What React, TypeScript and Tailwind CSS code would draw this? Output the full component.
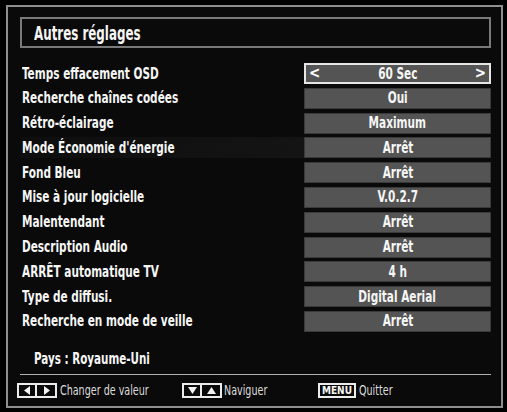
const settings = [
  { label: 'Temps effacement OSD', value: '60 Sec' },
  { label: 'Recherche chaînes codées', value: 'Oui' },
  { label: 'Rétro-éclairage', value: 'Maximum' },
  { label: "Mode Économie d'énergie", value: 'Arrêt' },
  { label: 'Fond Bleu', value: 'Arrêt' },
  { label: 'Mise à jour logicielle', value: 'V.0.2.7' },
  { label: 'Malentendant', value: 'Arrêt' },
  { label: 'Description Audio', value: 'Arrêt' },
  { label: 'ARRÊT automatique TV', value: '4 h' },
  { label: 'Type de diffusi.', value: 'Digital Aerial' },
  { label: 'Recherche en mode de veille', value: 'Arrêt' },
];

const SELECTED = 0;
const HIGHLIGHT = 3;

type Dir = 'left' | 'right' | 'up' | 'down';

const Triangle = ({ dir }: { dir: Dir }) => {
  const pts = {
    left: '8,1 8,10 2,5.5',
    right: '3,1 3,10 9,5.5',
    up: '5.5,2 10,9 1,9',
    down: '1,2 10,2 5.5,9',
  }[dir];
  return (
    <svg width="11" height="11" viewBox="0 0 11 11">
      <polygon points={pts} fill="#f2f2f2" />
    </svg>
  );
};

const KeyPair = ({ a, b }: { a: Dir; b: Dir }) => (
  <div className="flex h-[15px] border-2 border-[#ececec]">
    <div className="flex w-[18px] items-center justify-center border-r-2 border-[#ececec]">
      <Triangle dir={a} />
    </div>
    <div className="flex w-[18px] items-center justify-center">
      <Triangle dir={b} />
    </div>
  </div>
);

export default function App() {
  return (
    <div className="h-[412px] w-[507px] bg-black pl-[6px] pt-[5px] font-['Liberation_Sans_Narrow','DejaVu_Sans_Condensed',sans-serif]">
      <div className="flex h-[403px] w-[497px] flex-col border-2 border-[#8e8e8e] bg-[#0a0a0a]">
        {/* title */}
        <div className="ml-[12px] mr-[10px] mt-[10px] flex h-[31px] items-center border-2 border-[#7a7a7a] pl-[12px]">
          <span className="inline-block origin-left scale-x-[0.66] whitespace-nowrap text-[20px] font-bold leading-none text-[#f6f6f6]">
            Autres réglages
          </span>
        </div>

        {/* settings */}
        <div className="ml-[12px] mr-[10px] mt-[15px] flex flex-col gap-[3.8px]">
          {settings.map((s, i) => (
            <div
              key={s.label}
              className={`flex h-[21px] items-center ${
                i === HIGHLIGHT ? 'bg-gradient-to-r from-[#0e0e0e] to-[#181818]' : ''
              }`}
            >
              <div className="flex-1 pl-[2px]">
                <span className="inline-block origin-left scale-x-[0.73] whitespace-nowrap text-[16px] font-bold text-[#f6f6f6]">
                  {s.label}
                </span>
              </div>
              <div
                className={`relative flex h-[21px] w-[187px] items-center justify-center bg-[#545454] ${
                  i === SELECTED ? 'border-2 border-[#e6e6e6]' : 'border border-[#3a3a3a]'
                }`}
              >
                {i === SELECTED && (
                  <span className="absolute left-[3px] text-[15px] font-bold text-white">&lt;</span>
                )}
                <span className="inline-block scale-x-[0.73] whitespace-nowrap text-[16px] font-bold text-[#f6f6f6]">
                  {s.value}
                </span>
                {i === SELECTED && (
                  <span className="absolute right-[3px] text-[15px] font-bold text-white">&gt;</span>
                )}
              </div>
            </div>
          ))}
        </div>

        {/* country */}
        <div className="ml-[26px] mt-[17px] h-[20px] leading-[20px]">
          <span className="inline-block origin-left scale-x-[0.72] whitespace-nowrap text-[16px] font-bold text-[#f6f6f6]">
            Pays : Royaume-Uni
          </span>
        </div>
        <div className="ml-[12px] mr-[10px] mt-[5px] h-px bg-[#b0b0b0]" />

        {/* footer legend */}
        <div className="ml-[9px] mt-[8px] flex h-[16px] items-center text-[14px] text-[#dcdcdc]">
          <div className="flex w-[165px] items-center">
            <KeyPair a="left" b="right" />
            <span className="ml-[3px] inline-block origin-left scale-x-[0.76] whitespace-nowrap">Changer de valeur</span>
          </div>
          <div className="flex w-[136px] items-center">
            <KeyPair a="down" b="up" />
            <span className="ml-[2px] inline-block origin-left scale-x-[0.76] whitespace-nowrap">Naviguer</span>
          </div>
          <div className="flex items-center">
            <div className="flex h-[15px] items-center border-2 border-[#ececec] px-[2px] text-[10px] font-bold leading-none text-[#f6f6f6]">
              MENU
            </div>
            <span className="ml-[3px] inline-block origin-left scale-x-[0.76] whitespace-nowrap">Quitter</span>
          </div>
        </div>
      </div>
    </div>
  );
}
